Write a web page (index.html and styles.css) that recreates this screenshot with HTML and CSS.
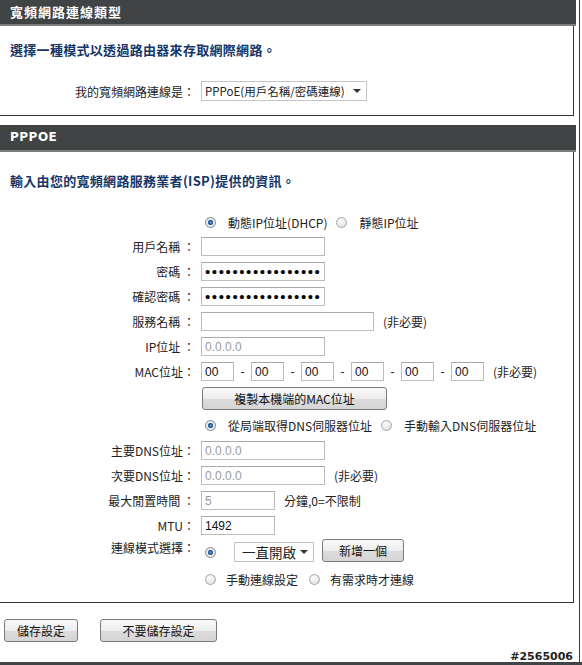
FILE: index.html
```html
<!DOCTYPE html>
<html lang="zh-Hant">
<head>
  <meta charset="UTF-8">
  <title>寬頻網路連線類型</title>
  <link rel="stylesheet" href="styles.css">
</head>
<body>
  <div class="page">
    <div class="box">
      <div class="box-head">寬頻網路連線類型</div>
      <p class="intro">選擇一種模式以透過路由器來存取網際網路。</p>
      <div class="conn-row">
        <span class="conn-label">我的寬頻網路連線是：</span>
        <span class="select select-wide"><span class="select-text">PPPoE(用戶名稱/密碼連線)</span><span class="arrow"></span></span>
      </div>
    </div>

    <div class="box box-pppoe">
      <div class="box-head latin">PPPOE</div>
      <p class="intro">輸入由您的寬頻網路服務業者(ISP)提供的資訊。</p>

      <div class="form">
        <div class="frow frow-first">
          <span class="flabel"></span>
          <input type="radio" name="ipmode" class="radio" checked><span class="opt">動態IP位址(DHCP)</span>
          <input type="radio" name="ipmode" class="radio"><span class="opt">靜態IP位址</span>
        </div>
        <div class="frow">
          <span class="flabel">用戶名稱 ：</span>
          <input type="text" class="field">
        </div>
        <div class="frow">
          <span class="flabel">密碼 ：</span>
          <input type="password" class="field pass" value="passwordpassword1">
        </div>
        <div class="frow">
          <span class="flabel">確認密碼 ：</span>
          <input type="password" class="field pass" value="passwordpassword1">
        </div>
        <div class="frow">
          <span class="flabel">服務名稱 ：</span>
          <input type="text" class="field field-long">
          <span class="note">(非必要)</span>
        </div>
        <div class="frow">
          <span class="flabel">IP位址 ：</span>
          <input type="text" class="field" value="0.0.0.0" disabled>
        </div>
        <div class="frow">
          <span class="flabel">MAC位址：</span>
          <input type="text" class="field mac" value="00"><span class="dash">-</span>
          <input type="text" class="field mac" value="00"><span class="dash">-</span>
          <input type="text" class="field mac" value="00"><span class="dash">-</span>
          <input type="text" class="field mac" value="00"><span class="dash">-</span>
          <input type="text" class="field mac" value="00"><span class="dash">-</span>
          <input type="text" class="field mac" value="00">
          <span class="note">(非必要)</span>
        </div>
        <div class="frow frow-btn">
          <span class="flabel"></span>
          <button class="btn btn-mac">複製本機端的MAC位址</button>
        </div>
        <div class="frow frow-dns">
          <span class="flabel"></span>
          <input type="radio" name="dnsmode" class="radio" checked><span class="opt">從局端取得DNS伺服器位址</span>
          <input type="radio" name="dnsmode" class="radio"><span class="opt">手動輸入DNS伺服器位址</span>
        </div>
        <div class="frow">
          <span class="flabel">主要DNS位址：</span>
          <input type="text" class="field" value="0.0.0.0" disabled>
        </div>
        <div class="frow">
          <span class="flabel">次要DNS位址：</span>
          <input type="text" class="field" value="0.0.0.0" disabled>
          <span class="note">(非必要)</span>
        </div>
        <div class="frow">
          <span class="flabel">最大閒置時間 ：</span>
          <input type="text" class="field field-short" value="5" disabled>
          <span class="note">分鐘,0=不限制</span>
        </div>
        <div class="frow">
          <span class="flabel">MTU：</span>
          <input type="text" class="field field-short" value="1492">
        </div>
        <div class="frow frow-mode">
          <span class="flabel flabel-top">連線模式選擇：</span>
          <input type="radio" name="connmode" class="radio" checked>
          <span class="select select-mode"><span class="select-text">一直開啟</span><span class="arrow"></span></span>
          <button class="btn btn-add">新增一個</button>
        </div>
        <div class="frow frow-last">
          <span class="flabel"></span>
          <input type="radio" name="connmode" class="radio"><span class="opt">手動連線設定</span>
          <input type="radio" name="connmode" class="radio"><span class="opt">有需求時才連線</span>
        </div>
      </div>
    </div>

    <div class="actions">
      <button class="btn btn-save">儲存設定</button>
      <button class="btn btn-cancel">不要儲存設定</button>
    </div>
    <div class="stamp">#2565006</div>
  </div>
  <div class="bottom-bar"></div>
</body>
</html>
```

FILE: styles.css
```css
body {
  margin: 0;
  background-color: #fff;
  font-family: "Noto Sans CJK TC", sans-serif;
  font-size: 12px;
  color: #222;
}
.page {
  width: 580px;
  height: 662px;
  border-right: 1px solid #3a3a3a;
  box-sizing: border-box;
}
.box {
  width: 574px;
  border-right: 1px solid #333;
  border-bottom: 1px solid #333;
  box-sizing: border-box;
  padding-bottom: 14px;
}
.box-pppoe {
  margin-top: 9px;
  padding-bottom: 10px;
}
.box-head {
  height: 24px;
  line-height: 24px;
  margin-right: -3px;
  padding-left: 10px;
  background-color: #404444;
  border-bottom: 2px solid #7b7d7d;
  color: #fff;
  font-weight: bold;
  font-size: 13px;
  letter-spacing: 1px;
}
.box-head.latin {
  font-family: "DejaVu Sans", "Noto Sans CJK TC", sans-serif;
  font-size: 12px;
  letter-spacing: 0.5px;
  height: 25px;
  line-height: 25px;
}
.intro {
  margin: 14px 0 0 10px;
  line-height: 20px;
  font-size: 13px;
  font-weight: bold;
  color: #153667;
  letter-spacing: 0.3px;
}
.box-pppoe .intro {
  margin-top: 19px;
}
.conn-row {
  display: flex;
  align-items: center;
  margin-top: 21px;
  height: 20px;
}
.conn-label {
  width: 195px;
  text-align: right;
  margin-right: 6px;
}
.select {
  display: inline-flex;
  align-items: center;
  flex-shrink: 0;
  height: 20px;
  box-sizing: border-box;
  border: 1px solid #c4c4c4;
  background-color: #fff;
  padding: 0 5px 0 3px;
  overflow: hidden;
}
.select-wide {
  width: 166px;
  font-size: 11.5px;
}
.select-text {
  flex: 1;
  white-space: nowrap;
}
.arrow {
  flex-shrink: 0;
  width: 0;
  height: 0;
  margin-left: 4px;
  border-left: 4px solid transparent;
  border-right: 4px solid transparent;
  border-top: 4px solid #333;
}
.select-mode {
  width: 80px;
  font-size: 13.5px;
  padding-left: 7px;
  margin-left: 6px;
}
.form {
  margin-top: 19px;
}
.frow {
  display: flex;
  align-items: center;
  height: 25px;
  white-space: nowrap;
}
.frow-first {
  height: 24px;
}
.frow-btn {
  height: 28px;
}
.frow-dns {
  height: 26px;
}
.frow-mode {
  height: 28px;
}
.frow-last {
  height: 26px;
}
.flabel {
  width: 195px;
  margin-right: 6px;
  text-align: right;
  flex-shrink: 0;
}
.flabel-top {
  align-self: flex-start;
  padding-top: 1px;
}
.field {
  width: 124px;
  height: 19px;
  box-sizing: border-box;
  margin: 0;
  padding: 0 3px;
  border: 1px solid #bcbcbc;
  border-top-color: #a9a9a9;
  background-color: #fff;
  font-family: "Liberation Sans", sans-serif;
  font-size: 12px;
  color: #111;
  outline: none;
}
.field:disabled {
  color: #9a9a9a;
  background-color: #fff;
}
.field-long {
  width: 173px;
}
.field-short {
  width: 74px;
}
.mac {
  width: 33px;
}
.pass {
  font-family: "Liberation Sans", sans-serif;
  font-size: 15px;
  letter-spacing: 1.6px;
  color: #000;
}
.dash {
  width: 17px;
  text-align: center;
  font-family: "Liberation Sans", sans-serif;
}
.note {
  margin-left: 9px;
}
.radio {
  appearance: none;
  -webkit-appearance: none;
  width: 11px;
  height: 11px;
  margin: 0 12px 0 4px;
  border-radius: 50%;
  border: 1px solid #a4a8ab;
  background: radial-gradient(circle at 40% 35%, #fdfdfd 0%, #e2e4e6 70%, #d0d3d6 100%);
  box-sizing: border-box;
  flex-shrink: 0;
}
.radio:checked {
  border-color: #7d8a95;
  background: radial-gradient(circle, #5f95c8 0%, #2f5f90 30%, #3a6a9a 38%, #e8ecef 46%, #d7dbde 100%);
}
.opt {
  margin-right: 5px;
}
.frow-last .opt {
  margin-right: 7px;
}
.frow-last .radio {
  margin-right: 10px;
}
.btn {
  height: 23px;
  box-sizing: border-box;
  border: 1px solid #7a7a7a;
  border-radius: 3px;
  background: linear-gradient(#fbfbfb, #ececec 50%, #dcdcdc 51%, #d5d5d5);
  font-family: "Noto Sans CJK TC", sans-serif;
  font-size: 12px;
  color: #111;
  padding: 0;
  cursor: pointer;
}
.btn-mac {
  width: 185px;
  margin-left: 1px;
}
.btn-add {
  width: 82px;
  margin-left: 8px;
  margin-top: -3px;
  flex-shrink: 0;
}
.actions {
  display: flex;
  gap: 22px;
  margin-top: 16px;
  padding-left: 4px;
}
.btn-save {
  width: 74px;
}
.btn-cancel {
  width: 117px;
}
.stamp {
  margin-top: 9px;
  text-align: right;
  padding-right: 6px;
  font-family: "DejaVu Sans", sans-serif;
  font-size: 11px;
  font-weight: bold;
  color: #222;
  line-height: 12px;
}
.bottom-bar {
  height: 3px;
  background-color: #404444;
}
```
